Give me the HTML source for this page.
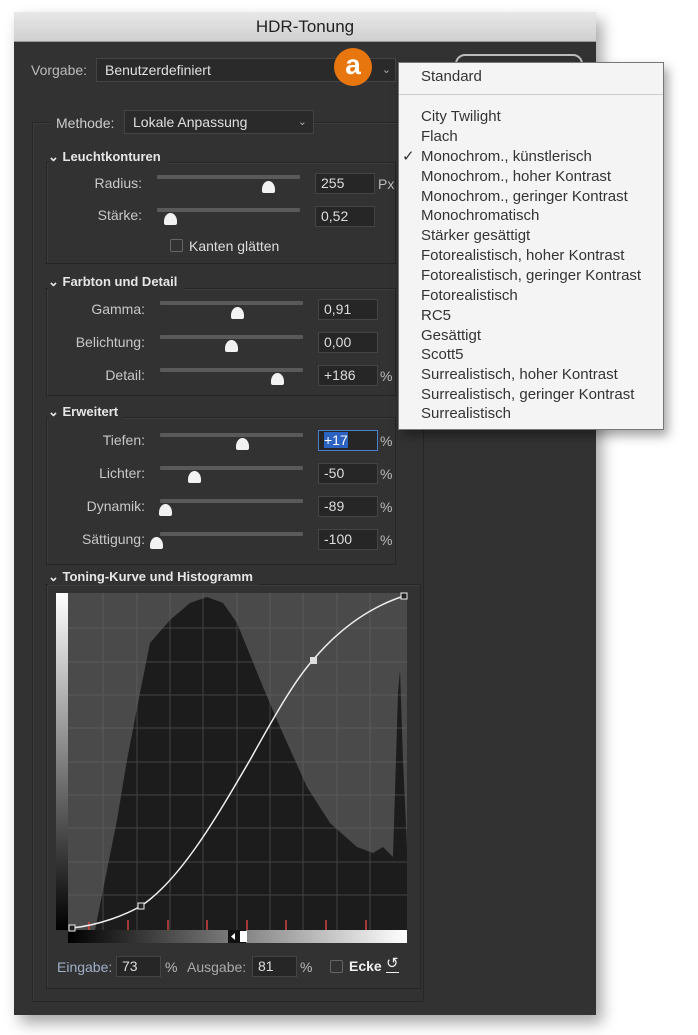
<!DOCTYPE html>
<html><head><meta charset="utf-8"><style>
*{margin:0;padding:0;box-sizing:border-box}
body{width:698px;height:1035px;background:#fff;position:relative;overflow:hidden;font-family:"Liberation Sans",sans-serif;font-size:14px}
.a{position:absolute}
#dlg{left:14px;top:12px;width:582px;height:1003px;background:#323232;box-shadow:6px 8px 14px rgba(0,0,0,.35)}
#title{left:14px;top:12px;width:582px;height:30px;background:linear-gradient(#e8e8e8,#d0d0d0);border-bottom:1px solid #999;text-align:center;line-height:30px;font-size:17px;color:#222}
.lbl{color:#c8c8c8;text-align:right;width:120px}
.hdr{color:#e6e6e6;font-weight:bold;font-size:13px}
.trk{height:4px;background:#5a5a5a;border-radius:1px}
.th{width:13px;height:12px;background:#f2f2f2;border-radius:50% 50% 2px 2px/70% 70% 2px 2px}
.inp{width:60px;height:21px;background:#262626;border:1px solid #444;color:#ddd;padding-left:5px;line-height:19px}
.pct{color:#bbb}
.box{border:1px solid #262626;box-shadow:inset 1px 1px 0 #3c3c3c}
#menu{left:398px;top:62px;width:266px;height:368px;background:#f4f4f4;border:1px solid #777;box-shadow:4px 6px 10px rgba(0,0,0,.35);color:#333;font-size:15px}
#menu div{position:absolute;left:22px}
</style></head><body>
<div id="dlg" class="a"></div>
<div id="title" class="a">HDR-Tonung</div>
<div class="a" style="left:455px;top:54px;width:128px;height:30px;border:2px solid #bbb;border-radius:10px;"></div>
<div class="a" style="left:31px;top:62px;color:#bbb">Vorgabe:</div>
<div class="a" style="left:96px;top:58px;width:300px;height:24px;background:#2a2a2a;border:1px solid #444;color:#e0e0e0;padding-left:8px;line-height:22px">Benutzerdefiniert<span style="position:absolute;right:4px;color:#aaa;font-size:11px">⌄</span></div>
<div class="a" style="left:334px;top:48px;width:38px;height:38px;border-radius:50%;background:#e8760e;color:#fff;font-size:28px;font-weight:bold;text-align:center;line-height:34px">a</div>
<div class="a box" style="left:32px;top:122px;width:392px;height:880px"></div>
<div class="a" style="left:50px;top:112px;width:75px;height:20px;background:#323232"></div>
<div class="a" style="left:56px;top:115px;color:#ccc">Methode:</div>
<div class="a" style="left:124px;top:110px;width:190px;height:24px;background:#2a2a2a;border:1px solid #444;color:#e0e0e0;padding-left:8px;line-height:22px">Lokale Anpassung<span style="position:absolute;right:6px;color:#aaa;font-size:11px">⌄</span></div>
<div class="a box" style="left:46px;top:162px;width:350px;height:102px"></div>
<div class="a box" style="left:46px;top:288px;width:350px;height:108px"></div>
<div class="a box" style="left:46px;top:417px;width:350px;height:148px"></div>
<div class="a box" style="left:46px;top:584px;width:375px;height:405px"></div>
<div class="a hdr" style="left:48px;top:149px;background:#323232;padding-right:6px">⌄ Leuchtkonturen</div>
<div class="a hdr" style="left:48px;top:274px;background:#323232;padding-right:6px">⌄ Farbton und Detail</div>
<div class="a hdr" style="left:48px;top:404px;background:#323232;padding-right:6px">⌄ Erweitert</div>
<div class="a hdr" style="left:48px;top:569px;background:#323232;padding-right:6px">⌄ Toning-Kurve und Histogramm</div>

<div class="a lbl" style="left:22px;top:175px">Radius:</div><div class="a trk" style="left:157px;top:175px;width:143px"></div><div class="a th" style="left:262px;top:181px"></div><div class="a inp" style="left:315px;top:173px">255</div><div class="a pct" style="left:378px;top:176px">Px</div>
<div class="a lbl" style="left:22px;top:207px">Stärke:</div><div class="a trk" style="left:157px;top:208px;width:143px"></div><div class="a th" style="left:164px;top:213px"></div><div class="a inp" style="left:315px;top:206px">0,52</div>
<div class="a" style="left:170px;top:239px;width:13px;height:13px;border:1px solid #666;border-radius:2px"></div><div class="a" style="left:189px;top:238px;color:#ddd">Kanten glätten</div>

<div class="a lbl" style="left:25px;top:301px">Gamma:</div><div class="a trk" style="left:160px;top:301px;width:143px"></div><div class="a th" style="left:231px;top:307px"></div><div class="a inp" style="left:318px;top:299px">0,91</div>
<div class="a lbl" style="left:25px;top:334px">Belichtung:</div><div class="a trk" style="left:160px;top:335px;width:143px"></div><div class="a th" style="left:225px;top:340px"></div><div class="a inp" style="left:318px;top:332px">0,00</div>
<div class="a lbl" style="left:25px;top:367px">Detail:</div><div class="a trk" style="left:160px;top:368px;width:143px"></div><div class="a th" style="left:271px;top:373px"></div><div class="a inp" style="left:318px;top:365px">+186</div><div class="a pct" style="left:380px;top:368px">%</div>

<div class="a lbl" style="left:25px;top:432px">Tiefen:</div><div class="a trk" style="left:160px;top:433px;width:143px"></div><div class="a th" style="left:236px;top:438px"></div><div class="a inp" style="left:318px;top:430px;border:1px solid #4a7fd0"><span style="background:#2c62c0;color:#fff">+17</span></div><div class="a pct" style="left:380px;top:433px">%</div>
<div class="a lbl" style="left:25px;top:465px">Lichter:</div><div class="a trk" style="left:160px;top:466px;width:143px"></div><div class="a th" style="left:188px;top:471px"></div><div class="a inp" style="left:318px;top:463px">-50</div><div class="a pct" style="left:380px;top:466px">%</div>
<div class="a lbl" style="left:25px;top:498px">Dynamik:</div><div class="a trk" style="left:160px;top:499px;width:143px"></div><div class="a th" style="left:159px;top:504px"></div><div class="a inp" style="left:318px;top:496px">-89</div><div class="a pct" style="left:380px;top:499px">%</div>
<div class="a lbl" style="left:25px;top:531px">Sättigung:</div><div class="a trk" style="left:160px;top:532px;width:143px"></div><div class="a th" style="left:150px;top:537px"></div><div class="a inp" style="left:318px;top:529px">-100</div><div class="a pct" style="left:380px;top:532px">%</div>

<svg class="a" style="left:0;top:0" width="698" height="1035">
<defs><linearGradient id="gv" x1="0" y1="0" x2="0" y2="1"><stop offset="0" stop-color="#fff"/><stop offset="1" stop-color="#000"/></linearGradient>
<linearGradient id="gh" x1="0" y1="0" x2="1" y2="0"><stop offset="0" stop-color="#000"/><stop offset="1" stop-color="#fff"/></linearGradient></defs>
<rect x="56" y="593" width="12" height="337" fill="url(#gv)"/>
<rect x="68" y="593" width="339" height="337" fill="#4a4a4a"/>
<path d="M95 930 L105 880 L117 820 L127 760 L140 693 L150 643 L170 620 L190 603 L207 597 L223 603 L237 623 L263 687 L280 727 L307 787 L330 823 L357 847 L373 853 L383 847 L393 857 L398 693 L400 670 L403 760 L407 847 L407 930 Z" fill="#1c1c1c"/>
<g stroke="#666" stroke-width="1" opacity=".55">
<path d="M103 593V930M137 593V930M170 593V930M203 593V930M237 593V930M270 593V930M303 593V930M337 593V930M370 593V930M68 628H407M68 662H407M68 695H407M68 728H407M68 762H407M68 795H407M68 828H407M68 862H407M68 895H407"/></g>
<g stroke="#d24040" stroke-width="1.5"><path d="M89 922V930M128 920V930M168 920V930M207 920V930M247 920V930M286 920V930M326 920V930M366 920V930"/></g>
<rect x="68" y="930" width="339" height="13" fill="url(#gh)"/>
<rect x="228" y="930" width="18" height="13" fill="#111"/><rect x="240" y="931" width="7" height="11" fill="#fff"/>
<path d="M235 933L231 936.5L235 940Z M242 933L246 936.5L242 940Z" fill="#fff"/>
<path d="M72 928 C100 925 125 915 141 906 C180 880 215 820 250 760 C275 715 295 680 313 660 C340 628 370 607 404 596" stroke="#eee" stroke-width="1.5" fill="none"/>
<rect x="69" y="925" width="6" height="6" fill="#222" stroke="#eee"/>
<rect x="138" y="903" width="6" height="6" fill="#222" stroke="#eee"/>
<rect x="310" y="657" width="7" height="7" fill="#ddd"/>
<rect x="401" y="593" width="6" height="6" fill="#222" stroke="#eee"/>
</svg>
<div class="a" style="left:57px;top:959px;color:#9fb0c8">Eingabe:</div><div class="a inp" style="left:116px;top:956px;width:45px">73</div><div class="a pct" style="left:165px;top:959px">%</div>
<div class="a" style="left:187px;top:959px;color:#aaa">Ausgabe:</div><div class="a inp" style="left:252px;top:956px;width:45px">81</div><div class="a pct" style="left:300px;top:959px">%</div>
<div class="a" style="left:330px;top:960px;width:13px;height:13px;border:1px solid #666;border-radius:2px"></div><div class="a" style="left:349px;top:958px;color:#eee;font-weight:bold">Ecke</div>
<div class="a" style="left:386px;top:956px;color:#eee;font-size:15px;border-bottom:1.5px solid #eee;line-height:16px">↺</div>

<div id="menu" class="a">
<div style="top:5px">Standard</div>
<div style="left:0;top:31px;width:264px;height:1px;background:#ccc"></div>
<div style="top:45px">City Twilight</div>
<div style="top:65px">Flach</div>
<div style="top:85px">Monochrom., künstlerisch</div>
<div style="left:3px;top:84px;font-size:15px">✓</div>
<div style="top:105px">Monochrom., hoher Kontrast</div>
<div style="top:125px">Monochrom., geringer Kontrast</div>
<div style="top:144px">Monochromatisch</div>
<div style="top:164px">Stärker gesättigt</div>
<div style="top:184px">Fotorealistisch, hoher Kontrast</div>
<div style="top:204px">Fotorealistisch, geringer Kontrast</div>
<div style="top:224px">Fotorealistisch</div>
<div style="top:244px">RC5</div>
<div style="top:264px">Gesättigt</div>
<div style="top:283px">Scott5</div>
<div style="top:303px">Surrealistisch, hoher Kontrast</div>
<div style="top:323px">Surrealistisch, geringer Kontrast</div>
<div style="top:342px">Surrealistisch</div>
</div>
</body></html>
